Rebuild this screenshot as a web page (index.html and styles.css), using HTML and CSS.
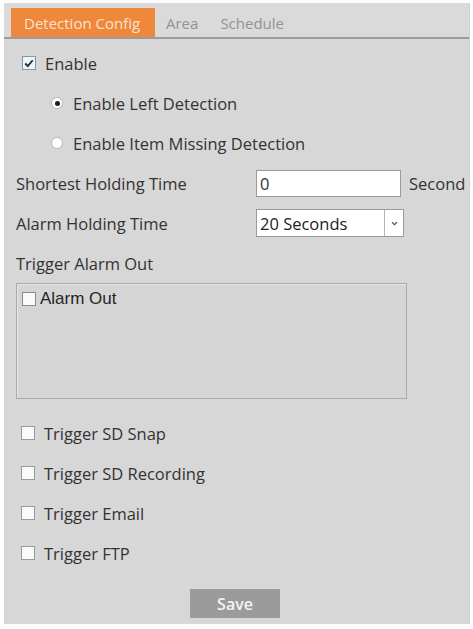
FILE: index.html
```html
<!DOCTYPE html>
<html lang="en">
<head>
<meta charset="utf-8">
<title>Detection Config</title>
<link rel="stylesheet" href="styles.css">
</head>
<body>
<div class="panel">
  <div class="tabs">
    <div class="tab active">Detection Config</div>
    <div class="tab">Area</div>
    <div class="tab">Schedule</div>
  </div>
  <div class="content">
    <div class="row">
      <span class="check checked"><svg viewBox="0 0 13 13" width="13" height="13"><path d="M2.5 6.5 L5.2 9.3 L10.5 3" fill="none" stroke="#1d2b3a" stroke-width="2"/></svg></span>
      <span class="text">Enable</span>
    </div>
    <div class="row indent">
      <span class="radio on"></span>
      <span class="text">Enable Left Detection</span>
    </div>
    <div class="row indent">
      <span class="radio"></span>
      <span class="text">Enable Item Missing Detection</span>
    </div>
    <div class="row field">
      <span class="label">Shortest Holding Time</span>
      <span class="input">0</span>
      <span class="unit">Second</span>
    </div>
    <div class="row field">
      <span class="label">Alarm Holding Time</span>
      <span class="select"><span class="value">20 Seconds</span><span class="arrow"><svg viewBox="0 0 8 6" width="7" height="5"><path d="M1 1.5 L4 4.5 L7 1.5" fill="none" stroke="#555" stroke-width="1.4"/></svg></span></span>
    </div>
    <div class="row field">
      <span class="label">Trigger Alarm Out</span>
    </div>
    <div class="outbox">
      <div class="outitem"><span class="check plain"></span><span>Alarm Out</span></div>
    </div>
    <div class="triggers">
      <div class="row trig"><span class="check plain"></span><span class="text">Trigger SD Snap</span></div>
      <div class="row trig"><span class="check plain"></span><span class="text">Trigger SD Recording</span></div>
      <div class="row trig"><span class="check plain"></span><span class="text">Trigger Email</span></div>
      <div class="row trig"><span class="check plain"></span><span class="text">Trigger FTP</span></div>
    </div>
    <div class="actions">
      <button class="save" type="button">Save</button>
    </div>
  </div>
</div>
</body>
</html>
```

FILE: styles.css
```css
html, body {
  margin: 0;
  padding: 0;
  background: #ffffff;
}

body {
  font-family: "Open Sans", "Noto Sans", sans-serif;
  font-size: 16.5px;
  color: #333333;
}

.panel {
  margin: 3px 3px 0 4px;
  height: 621px;
  background: #d7d7d7;
  border-right: 1px solid #cfcfcf;
  box-sizing: border-box;
}

/* tab strip */
.tabs {
  display: flex;
  align-items: stretch;
  height: 36px;
  padding: 5px 0 0 7px;
  box-sizing: border-box;
  border-bottom: 2px solid #9c9c9c;
  background: #dadada;
}

.tab {
  display: flex;
  align-items: center;
  padding: 0 0 0 11px;
  font-size: 15px;
  color: #929292;
}

.tab + .tab + .tab {
  padding-left: 22px;
}

.tab.active {
  background: #f0883c;
  color: #fbe3cf;
  padding: 0 0 0 13px;
  width: 144px;
  box-sizing: border-box;
}

.content {
  padding: 4px 0 0 12px;
}

.row {
  display: flex;
  align-items: center;
  height: 40px;
}

.row .text {
  margin-left: 9px;
}

.indent {
  padding-left: 35px;
}

.indent .text {
  margin-left: 10px;
}

/* checkboxes */
.check {
  display: inline-flex;
  align-items: center;
  justify-content: center;
  width: 13px;
  height: 13px;
  box-sizing: border-box;
  background: #fafafa;
  border: 1px solid #8d8d8d;
  flex: none;
}

.row > .check {
  margin-left: 6px;
}

.check.checked {
  width: 14px;
  height: 14px;
  border-color: #7f99aa;
  background: #eef4f6;
}

.check svg {
  display: block;
}

/* radios */
.radio {
  width: 12px;
  height: 12px;
  border-radius: 50%;
  background: #ffffff;
  border: 1px solid #bdbdbd;
  box-shadow: 0 0 1px #c8c8c8;
  box-sizing: border-box;
  position: relative;
  flex: none;
}

.radio.on::after {
  content: "";
  position: absolute;
  left: 2.5px;
  top: 2.5px;
  width: 5px;
  height: 5px;
  border-radius: 50%;
  background: #1c1c1c;
}

/* labelled fields */
.field .label {
  width: 240px;
  flex: none;
}

.input {
  width: 145px;
  height: 27px;
  box-sizing: border-box;
  background: #ffffff;
  border: 1px solid #9a9a9a;
  padding: 0 3px;
  display: flex;
  align-items: center;
  color: #333;
}

.unit {
  margin-left: 8px;
}

.select {
  display: flex;
  width: 148px;
  height: 28px;
  box-sizing: border-box;
  background: #ffffff;
  border: 1px solid #9a9a9a;
}

.select .value {
  flex: 1;
  display: flex;
  align-items: center;
  padding-left: 3px;
  color: #222;
}

.select .arrow {
  width: 18px;
  border-left: 1px solid #b4b4b4;
  display: flex;
  align-items: center;
  justify-content: center;
}

.select .arrow svg {
  display: block;
}

/* alarm output list */
.outbox {
  width: 391px;
  height: 116px;
  box-sizing: border-box;
  border: 1px solid #a9a9a9;
  box-shadow: inset 1px 1px 0 #e6e6e6;
  background: #d5d5d5;
  padding: 5px 0 0 5px;
}

.outitem {
  display: flex;
  align-items: center;
  font-family: "Liberation Sans", Arial, sans-serif;
  font-size: 17px;
  color: #262626;
}

.outitem .check {
  width: 14px;
  height: 14px;
  margin-right: 4px;
  border-color: #8a8a8a;
}

.triggers {
  margin-top: 14px;
}

.trig .check {
  width: 14px;
  height: 14px;
  margin-left: 5px;
  border-color: #9a9a9a;
}

.actions {
  display: flex;
  padding-left: 174px;
  margin-top: 16px;
}

.save {
  width: 90px;
  height: 29px;
  border: none;
  background: #9b9b9b;
  color: #f4f4f4;
  font-family: "Open Sans", "Noto Sans", sans-serif;
  font-size: 16px;
  font-weight: 600;
  padding: 0;
}
```
